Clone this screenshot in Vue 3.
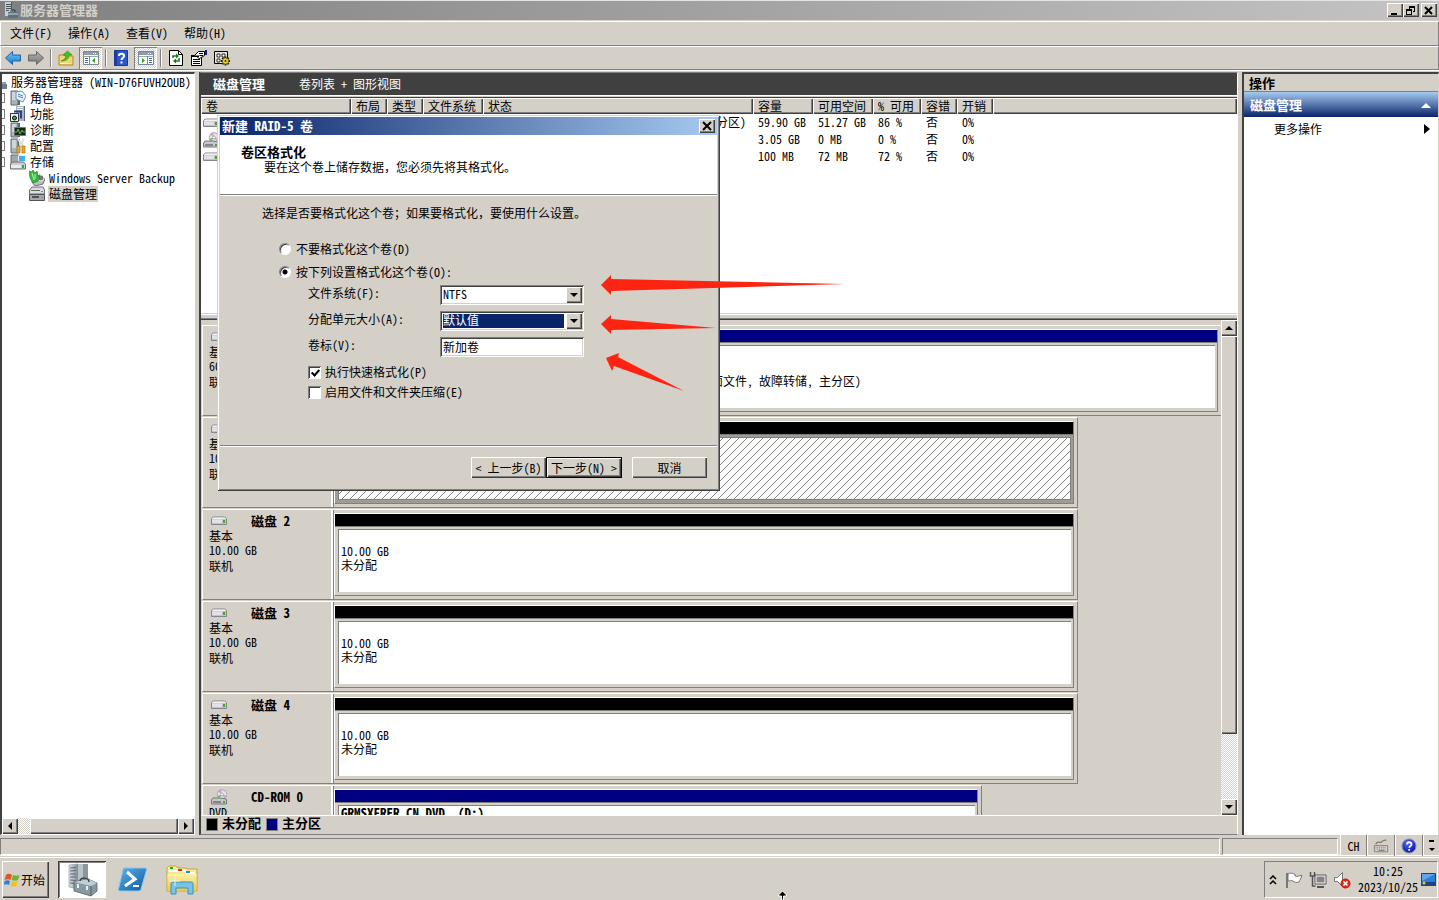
<script setup>
import { ref } from 'vue'

const menus = ['文件(F)', '操作(A)', '查看(V)', '帮助(H)']

const tools = [
  { icon: 'back', label: '后退' },
  { icon: 'forward', label: '前进' },
  { sep: true },
  { icon: 'folder-up', label: '向上' },
  { icon: 'pane-left', label: '显示/隐藏控制台树', pressed: true },
  { sep: true },
  { icon: 'help', label: '帮助' },
  { icon: 'pane-right', label: '显示/隐藏操作窗格', pressed: true },
  { sep: true },
  { icon: 'refresh', label: '刷新' },
  { icon: 'props', label: '属性' },
  { icon: 'settings', label: '设置' },
]

const tree = [
  { icon: 'roles', text: '角色' },
  { icon: 'features', text: '功能' },
  { icon: 'diag', text: '诊断' },
  { icon: 'config', text: '配置' },
  { icon: 'storage', text: '存储' },
  { icon: 'backup', text: 'Windows Server Backup', child: true },
  { icon: 'diskmgmt', text: '磁盘管理', child: true, selected: true },
]

const columns = ['卷', '布局', '类型', '文件系统', '状态', '容量', '可用空间', '% 可用', '容错', '开销', '']

const volumes = [
  { icon: 'drive', status: '状态良好 (启动, 页面文件, 故障转储, 主分区)', size: '59.90 GB', free: '51.27 GB', pct: '86 %' },
  { icon: 'cdrom', status: '', size: '3.05 GB', free: '0 MB', pct: '0 %' },
  { icon: 'drive', status: '', size: '100 MB', free: '72 MB', pct: '72 %' },
]

const disks = [
  {
    id: 0, name: '', icon: 'drive', info: ['基本', '60.00 GB', '联机'], span: 'full',
    parts: [
      { lines: [], bar: 'navy', small: true },
      { lines: ['', '状态良好 (启动, 页面文件, 故障转储, 主分区)'], bar: 'navy' },
    ],
  },
  { id: 1, name: '', icon: 'drive', info: ['基本', '10.00 GB', '联机'], span: 'wide', parts: [{ lines: [], bar: 'black', selected: true }] },
  { id: 2, name: '磁盘 2', icon: 'drive', info: ['基本', '10.00 GB', '联机'], span: 'wide', parts: [{ lines: ['10.00 GB', '未分配'], bar: 'black' }] },
  { id: 3, name: '磁盘 3', icon: 'drive', info: ['基本', '10.00 GB', '联机'], span: 'wide', parts: [{ lines: ['10.00 GB', '未分配'], bar: 'black' }] },
  { id: 4, name: '磁盘 4', icon: 'drive', info: ['基本', '10.00 GB', '联机'], span: 'wide', parts: [{ lines: ['10.00 GB', '未分配'], bar: 'black' }] },
  { id: 5, name: 'CD-ROM 0', icon: 'cdrom', info: ['DVD'], span: 'cd', parts: [{ lines: [], bar: 'navy', title: 'GRMSXFRER_CN_DVD  (D:)' }] },
]

const doFormat = ref('yes')
const fileSystem = ref('NTFS')
const unitSize = ref('默认值')
const volumeLabel = ref('新加卷')
const quick = ref(true)
const compress = ref(false)
</script>

<template>
  <div class="screen">
    <svg class="sprite" aria-hidden="true">
      <defs>
        <linearGradient id="gBlue" x1="0" y1="0" x2="0" y2="1"><stop offset="0" stop-color="#7cc8f4" /><stop offset="1" stop-color="#1478c8" /></linearGradient>
        <linearGradient id="gGrey" x1="0" y1="0" x2="0" y2="1"><stop offset="0" stop-color="#b4b4b4" /><stop offset="1" stop-color="#747474" /></linearGradient>
        <linearGradient id="gSteel" x1="0" y1="0" x2="1" y2="0"><stop offset="0" stop-color="#dfe5e8" /><stop offset="1" stop-color="#7c888f" /></linearGradient>
        <linearGradient id="gPs" x1="0" y1="0" x2="1" y2="1"><stop offset="0" stop-color="#5fb4e4" /><stop offset="1" stop-color="#0a58a8" /></linearGradient>
        <linearGradient id="gFold" x1="0" y1="0" x2="0" y2="1"><stop offset="0" stop-color="#fdf2a8" /><stop offset="1" stop-color="#ecc64c" /></linearGradient>
        <radialGradient id="gHelp" cx=".4" cy=".3" r=".8"><stop offset="0" stop-color="#4a6cff" /><stop offset="1" stop-color="#0008a0" /></radialGradient>
        <symbol id="tower" viewBox="0 0 16 16"><path d="M1 1h7v14H1z" fill="#a9b4ba" stroke="#5f6c73" /><path d="M2 3h4M2 5h4M2 7h4M2 9h4" stroke="#f4f7f8" /><path d="M8 1h2v14H8z" fill="#56646b" /></symbol>
      </defs>
      <symbol id="server" viewBox="0 0 16 16"><path d="M3 0h7v14H3z" fill="#c6d0d4" /><path d="M4 2.500h5M4 4.500h5M4 6.500h5M4 8.500h3" stroke="#44545c" /><path d="M9 0h1v8H9z" fill="#4b5a62" /><path d="M6 10h10v6H6z" fill="#5d7180" /><path d="M6 12h10" stroke="#c6d2d9" /><path d="M9 10V8h4v2" fill="none" stroke="#2e3b44" /></symbol>
      <symbol id="back" viewBox="0 0 16 14"><path d="M.5 7l7-6.500v3.500h8v6h-8v3.500z" fill="url(#gBlue)" stroke="#1a66a8" /></symbol>
      <symbol id="forward" viewBox="0 0 16 14"><path d="M15.500 7L8.500.5v3.500H.5v6h8v3.500z" fill="url(#gGrey)" stroke="#666" /></symbol>
      <symbol id="folder-up" viewBox="0 0 16 16"><path d="M1 5h5l1 1h8v9H1z" fill="#f3d476" stroke="#b18b2b" /><path d="M2 13h12v1H2z" fill="#fdf1bf" /><path d="M3 11c3-1 5-3 5-6H5l4.500-4L14 5h-3c0 4-3 6-8 6z" fill="#4ac21c" stroke="#2d8b0c" stroke-width=".6" /></symbol>
      <symbol id="pane-left" viewBox="0 0 16 14"><path d="M.5.5h15v13H.5z" fill="#fff" stroke="#7b8795" /><path d="M1 1h14v3H1z" fill="#8d9cb0" /><path d="M10 2.500h1M12 2.500h1" stroke="#fff" /><path d="M1 5.500h14" stroke="#9aa" /><path d="M6.500 5v8" stroke="#7b8795" /><path d="M2 7.500h3M2 9.500h3M2 11.500h3" stroke="#3d64a8" /><path d="M12 7v5L9 9.500z" fill="#27a51c" /></symbol>
      <symbol id="pane-right" viewBox="0 0 16 14"><path d="M.5.5h15v13H.5z" fill="#fff" stroke="#7b8795" /><path d="M1 1h14v3H1z" fill="#8d9cb0" /><path d="M10 2.500h1M12 2.500h1" stroke="#fff" /><path d="M1 5.500h14" stroke="#9aa" /><path d="M9.500 5v8" stroke="#7b8795" /><path d="M11 7.500h3M11 9.500h3M11 11.500h3" stroke="#3d64a8" /><path d="M4 7v5l3-2.500z" fill="#27a51c" /></symbol>
      <symbol id="help" viewBox="0 0 14 16"><path d="M.5.5h13v15H.5z" fill="#2b57c8" stroke="#1a3a94" /><path d="M1 1h2v14H1z" fill="#1b3f9e" /><path d="M5 6c0-3 5-3 5 0 0 2-2.500 2-2.500 4M7.500 11.500v2" fill="none" stroke="#fff" stroke-width="2" /></symbol>
      <symbol id="refresh" viewBox="0 0 14 16"><path d="M.5.5h9l4 4v11H.5z" fill="#fff" stroke="#000" /><path d="M9.500.5v4h4" fill="none" stroke="#000" /><path d="M4 8V6h4M10 8v3H6" fill="none" stroke="#14801c" stroke-width="1.500" /><path d="M7 3.500L10 6 7 8.500zM7 8.500L4 11l3 2.500z" fill="#14801c" /></symbol>
      <symbol id="props" viewBox="0 0 16 16"><path d="M.5 5.500h10v10H.5z" fill="#fff" stroke="#000" /><path d="M0 5h11v2H0z" fill="#000" /><path d="M2 9.500h7M2 11.500h7M2 13.500h7" stroke="#000" /><path d="M3.500 5.500l4-4h6v4l-5 3-2-1 2-2" fill="#fff" stroke="#000" /><path d="M8 3.500h4M9 5.500h3" stroke="#000" /><path d="M14 0h2v5h-2z" fill="#1a1a90" /></symbol>
      <symbol id="settings" viewBox="0 0 16 16"><path d="M.5 1.500h13v12H.5z" fill="#e6e3dc" stroke="#000" /><path d="M3 4h3v3H3zM3 9h3v3H3zM8 4h3v3H8z" fill="#fff" stroke="#000" stroke-width=".8" /><g transform="translate(11.500 11)"><path d="M0-4.500V4.500M-4.500 0H4.500M-3.200-3.200L3.200 3.200M-3.200 3.200L3.200-3.200" stroke="#222" stroke-width="2" /><circle r="3" fill="#f1d528" stroke="#6d5b00" stroke-width=".6" /><circle r="1" fill="#222" /></g></symbol>
      <symbol id="roles" viewBox="0 0 16 16"><use href="#tower" /><path d="M6 2l6-1 4 5-3 6-7-3z" fill="#e4f1f9" stroke="#7391a4" /><path d="M8 4l5 2M8 6l5 2" stroke="#4d86b0" /></symbol>
      <symbol id="features" viewBox="0 0 16 16"><path d="M6 0h9v15H6z" fill="#a9b4ba" /><path d="M7 1.500h6M7 3.500h6" stroke="#f4f7f8" /><path d="M14 0h1v15h-1z" fill="#56646b" /><path d="M.5 7.500h8v8h-8z" fill="#f2f2f2" stroke="#333" /><path d="M4 5.500h7v7" fill="none" stroke="#223f9e" stroke-width="2" /><circle cx="4.500" cy="12" r="2" fill="#2ca836" stroke="#111" /></symbol>
      <symbol id="diag" viewBox="0 0 16 16"><use href="#tower" /><path d="M4.500 5.500h11v8h-11z" fill="#18261a" stroke="#777" /><path d="M5 10h2l1-3 2 5 2-4 1 2h2" fill="none" stroke="#59c14a" /></symbol>
      <symbol id="config" viewBox="0 0 16 16"><use href="#tower" /><path d="M8 1l2 3v9M14 1l-2 3v5" fill="none" stroke="#dbe1e4" stroke-width="2" /><path d="M7 8h3v7H7zM12 8h3v7h-3z" fill="#f0a71e" stroke="#9a6508" stroke-width=".6" /></symbol>
      <symbol id="storage" viewBox="0 0 16 16"><path d="M1 1h8v9H1z" fill="#9fa8ad" stroke="#626b70" /><path d="M8.500 1.500h7v6h-7z" fill="#45aee4" stroke="#e9edf0" /><path d="M.5 10l2-2h11l2 2v5H.5z" fill="#c9cdd0" stroke="#555" stroke-width=".8" /><path d="M1 11h10v3H1z" fill="#ececee" /><path d="M12 11h2v3h-2z" fill="#2ab12a" /></symbol>
      <symbol id="backup" viewBox="0 0 16 16"><path d="M4 8l7-3 5 4-2 5-8 2-3-4z" fill="#b8bdc0" stroke="#6c7276" /><circle cx="12" cy="8" r="3" fill="#8d6f74" stroke="#eee" /><path d="M0 1l3 1 1-2 2 3 2-2 1 5 2-1-2 6-5 2-3-5z" fill="#35b93d" stroke="#157d1f" stroke-width=".6" /><path d="M3 3l2 7M6 4v5" stroke="#b9f0b2" /></symbol>
      <symbol id="diskmgmt" viewBox="0 0 16 16"><path d="M3 1h11l1.500 3v4H.5V4z" fill="#d9dcde" stroke="#6b6f73" /><path d="M2 4.500h9" stroke="#666" /><path d="M.5 8.500h15v6H.5z" fill="#a5a9ac" stroke="#505457" /><path d="M3 11h7" stroke="#333" stroke-width="1.500" /><path d="M12 5h2v1h-2zM12 11h2v1h-2z" fill="#1d1" /></symbol>
      <symbol id="drive" viewBox="0 0 16 10"><path d="M2 1h12l1.500 2v5.500H.5V3z" fill="#c2c2c8" stroke="#85858d" /><path d="M2 1.500h12L15 3H1z" fill="#f2f2f4" /><path d="M1 3.500h10V7H1z" fill="#e2e2e6" /><path d="M12 4h2v3h-2z" fill="#4da821" /></symbol>
      <symbol id="cdrom" viewBox="0 0 16 16"><circle cx="11" cy="5.500" r="4.800" fill="#e2e2e8" stroke="#a9a9af" /><path d="M11 5.500l-4-3 3-2zM11 5.500l4.500 1-2 3z" fill="#c879c8" opacity=".6" /><path d="M11 5.500L6.500 7 8 9z" fill="#4fca3c" /><circle cx="11" cy="5.500" r="1.400" fill="#fff" stroke="#888" stroke-width=".6" /><path d="M2 9h8l5 1 .5 1v4H.5v-4z" fill="#c6c6cc" stroke="#77777f" /><path d="M2 13h8" stroke="#444" /><path d="M12 12h2v2h-2z" fill="#4da821" /></symbol>
    </svg>

    <header class="titlebar">
      <svg class="i16"><use href="#server" /></svg>
      <h1>服务器管理器</h1>
      <div class="winbtns">
        <button aria-label="最小化"><svg viewBox="0 0 14 13"><path d="M3 9h6v2H3z" /></svg></button>
        <button aria-label="还原"><svg viewBox="0 0 14 13"><path d="M5 2h6v6H9V7h1V4H6v1H5zM2 5h6v6H2zM3 7v3h4V7z" fill-rule="evenodd" /></svg></button>
        <button class="close" aria-label="关闭"><svg viewBox="0 0 14 13"><path d="M3 3l7 7M10 3l-7 7" stroke="#000" stroke-width="2" /></svg></button>
      </div>
    </header>

    <nav class="menubar">
      <button v-for="m in menus" :key="m">{{ m }}</button>
    </nav>

    <div class="toolbar">
      <template v-for="(t, i) in tools" :key="i">
        <span v-if="t.sep" class="sep"></span>
        <button v-else :class="{ pressed: t.pressed }" :aria-label="t.label"><svg class="i16"><use :href="'#' + t.icon" /></svg></button>
      </template>
    </div>

    <main class="body">
      <aside class="tree">
        <ul>
          <li class="root"><svg class="half" viewBox="0 0 6 16"><path d="M0 10h5v5H0z" fill="#6b7d89" /><path d="M0 9h4" stroke="#2e3b44" /></svg><span>服务器管理器 (WIN-D76FUVH2OUB)</span></li>
          <li v-for="n in tree" :key="n.text" :class="{ child: n.child, selected: n.selected }">
            <i v-if="!n.child" class="expander"></i>
            <svg class="i16"><use :href="'#' + n.icon" /></svg><span>{{ n.text }}</span>
          </li>
        </ul>
        <div class="hscroll">
          <button aria-label="向左滚动"><svg viewBox="0 0 8 8"><path d="M6 0v8L2 4z" /></svg></button>
          <span class="hthumb"></span>
          <button aria-label="向右滚动"><svg viewBox="0 0 8 8"><path d="M2 0v8l4-4z" /></svg></button>
        </div>
      </aside>

      <section class="center">
        <div class="heading"><h2>磁盘管理</h2><span>卷列表 + 图形视图</span></div>
        <div class="vlist">
          <table>
            <colgroup><col class="c-name" /><col class="c36" /><col class="c36" /><col class="c60" /><col class="c-status" /><col class="c60" /><col class="c60" /><col class="c48" /><col class="c36" /><col class="c36" /><col /></colgroup>
            <thead><tr><th v-for="(c, i) in columns" :key="i">{{ c }}</th></tr></thead>
            <tbody>
              <tr v-for="(v, i) in volumes" :key="i">
                <td class="vicon"><svg class="i16"><use :href="'#' + v.icon" /></svg></td>
                <td></td><td></td><td></td>
                <td>{{ v.status }}</td><td>{{ v.size }}</td><td>{{ v.free }}</td><td>{{ v.pct }}</td><td>否</td><td>0%</td><td></td>
              </tr>
            </tbody>
          </table>
        </div>
        <div class="splitter"></div>
        <div class="graph">
          <div class="disks">
            <article v-for="d in disks" :key="d.id" class="disk" :class="d.span">
              <div class="dinfo">
                <div class="dhead"><svg class="i16"><use :href="'#' + d.icon" /></svg><h3>{{ d.name }}</h3></div>
                <p v-for="t in d.info" :key="t">{{ t }}</p>
              </div>
              <div class="parts">
                <div v-for="(p, i) in d.parts" :key="i" class="part" :class="{ small: p.small, selected: p.selected }">
                  <div class="bar" :class="p.bar"></div>
                  <div class="frame"><div class="box">
                    <strong>{{ p.title }}</strong>
                    <p v-for="l in p.lines" :key="l">{{ l }}</p>
                  </div></div>
                </div>
              </div>
            </article>
          </div>
          <div class="vscroll">
            <button aria-label="向上滚动"><svg viewBox="0 0 8 8"><path d="M0 6h8L4 2z" /></svg></button>
            <span class="vthumb"></span>
            <span class="vtrack"></span>
            <button aria-label="向下滚动"><svg viewBox="0 0 8 8"><path d="M0 2h8L4 6z" /></svg></button>
          </div>
        </div>
        <div class="legend"><i class="black"></i><span>未分配</span><i class="navy"></i><span>主分区</span></div>
      </section>

      <aside class="actions">
        <h2>操作</h2>
        <h3><span>磁盘管理</span><svg viewBox="0 0 10 6"><path d="M0 6h10L5 1z" fill="#fff" /></svg></h3>
        <button><span>更多操作</span><svg viewBox="0 0 6 10"><path d="M0 0v10l6-5z" /></svg></button>
      </aside>
    </main>

    <footer class="status">
      <span class="s1"></span><span class="s2"></span>
      <div class="langbar">
        <button class="ch">CH</button>
        <button aria-label="键盘"><svg viewBox="0 0 18 16"><path d="M1.500 7.500h15v7h-15z" fill="#d6d3cc" stroke="#7c7c7c" /><path d="M3 9.500h12M3 11.500h12" stroke="#757575" stroke-dasharray="1 1" /><path d="M6 13h7" stroke="#757575" /><path d="M3 6c3-5 5 0 7-3s3 0 5-2" fill="none" stroke="#7c7c7c" stroke-width="1.500" /></svg></button>
        <button aria-label="帮助"><svg viewBox="0 0 16 16"><circle cx="8" cy="8" r="7" fill="url(#gHelp)" stroke="#8890a8" /><path d="M6 6.500c0-3 4.500-3 4.500 0 0 1.500-2.200 1.500-2.200 3.200M8.200 11v1.800" fill="none" stroke="#fff" stroke-width="1.800" /></svg></button>
        <button class="more" aria-label="选项"><svg viewBox="0 0 8 14"><path d="M1 1h5v2H1zM1 9h6l-3 3z" /></svg></button>
      </div>
    </footer>

    <footer class="taskbar">
      <button class="start">
        <svg viewBox="0 0 16 16"><path d="M2 3c2-2 4-1 6 0L6.500 8C5 7 3 7 .5 8z" fill="#e8541c" /><path d="M9 3c2 1 4 1 6.500 0L14 8c-2 1-4 1-6.500 0z" fill="#6db52c" /><path d="M.5 9C3 8 4.500 8 6 9L5 13c-2-1-3.500-1-5 0z" fill="#2f7fd6" /><path d="M7.500 9c2 1 4 1 6.500 0l-1.500 5c-2 1-4 1-6 0z" fill="#f7c027" /></svg>
        <span>开始</span>
      </button>
      <button class="task active" aria-label="服务器管理器">
        <svg viewBox="0 0 32 34"><path d="M3 2l9-1v25l-9-2z" fill="url(#gSteel)" stroke="#88949a" stroke-width=".6" /><path d="M4 5l6-.5M4 8l6-.5M4 11h6M4 14h6M4 17l6 .5M4 20l6 .5" stroke="#5c6970" /><path d="M12 1h10v26H12z" fill="#8b979c" /><path d="M12 1h5v26h-5z" fill="#b9c3c7" /><path d="M8 19l14-3 9 4v8l-6 5-17-5z" fill="#8799a1" stroke="#51616a" stroke-width=".8" /><path d="M8 19l17 4 6-3-9-4z" fill="#c1ced3" /><path d="M14 18c0-4 9-4 9 1" fill="none" stroke="#39464e" stroke-width="1.500" /><path d="M25 23v10" stroke="#51616a" /><path d="M12 21v4M21 23v4" stroke="#e9eef0" stroke-width="2" /></svg>
      </button>
      <button class="task" aria-label="PowerShell">
        <svg viewBox="0 0 32 32"><path d="M8 4h21c1 0 2 1 1.500 2L25 25c0 1-1 2-3 2H4c-1 0-2-1-1.500-2L7 6c0-1 0-2 1-2z" fill="url(#gPs)" stroke="#8cc8ea" /><path d="M11 8l8 7-10 7" fill="none" stroke="#fff" stroke-width="3" /><path d="M17 22h6" stroke="#fff" stroke-width="2" /></svg>
      </button>
      <button class="task" aria-label="文件管理器">
        <svg viewBox="0 0 32 32"><path d="M1 4l2-2h7l2 2h8l1 1h10v22H1z" fill="url(#gFold)" stroke="#c9a23b" /><path d="M3 6h10v2H3zM12 6h8v2h-8zM20 8h9v2h-9z" fill="#fff" /><path d="M4 3h3v2H4z" fill="#0b2" /><path d="M12 5h4v2h-4z" fill="#d43a1a" /><path d="M20 7h4v2h-4z" fill="#1b8ee8" /><path d="M1.500 10h29v17h-29z" fill="url(#gFold)" /><path d="M5 30V20c0-2 1-2 2-2h18c2 0 2 1 2 2v10h-5v-6H10v6z" fill="#79c3e6" stroke="#3b93bf" /><path d="M9 12v10M4 17h10" stroke="#fff" opacity=".8" /></svg>
      </button>
      <svg class="cursor" viewBox="0 0 9 9"><path d="M4.500 0l4 4v1h-3v4h-2V5h-3V4z" stroke="#fff" /></svg>
      <div class="tray">
        <svg class="chev" viewBox="0 0 8 10"><path d="M1 4l3-3 3 3M1 9l3-3 3 3" fill="none" stroke="#000" stroke-width="1.500" /></svg>
        <svg class="t18" viewBox="0 0 18 18"><path d="M2 2v15" stroke="#777" stroke-width="2" /><path d="M3 3c3-2 5 0 7 0v2c2 1 4 0 7-1-1 3-2 5-3 7-3 1-5 0-6-1-2-1-3 0-5 0z" fill="#fff" stroke="#777" /></svg>
        <svg class="t18" viewBox="0 0 18 18"><path d="M6 4h11v9H6z" fill="#fff" stroke="#555" /><path d="M7.500 5.500h8v6h-8z" fill="#858585" /><path d="M8 16h7" stroke="#555" stroke-width="2" /><path d="M1.500 1v4h4V1M3.500 5v10h3" fill="none" stroke="#555" stroke-width="1.500" /></svg>
        <svg class="t18" viewBox="0 0 18 18"><path d="M1.500 6.500h3l5-5v14l-5-5h-3z" fill="#fff" stroke="#777" /><circle cx="12.500" cy="12.500" r="4.500" fill="#e02a20" stroke="#b8140c" /><path d="M10.500 10.500l4 4M14.500 10.500l-4 4" stroke="#fff" stroke-width="1.500" /></svg>
        <div class="clock"><time>10:25</time><time>2023/10/25</time></div>
        <svg class="desk" viewBox="0 0 15 13"><path d="M.5.500h14v9H.5z" fill="#2c7fd8" stroke="#1b3f80" /><path d="M1 1h13L1 8z" fill="#76b6f0" opacity=".7" /><path d="M0 10h15v3H0z" fill="#20457c" /><circle cx="3" cy="10" r="1.500" fill="#f5c62a" /></svg>
      </div>
    </footer>

    <form class="dialog" @submit.prevent>
      <header class="dtitle"><h2>新建 RAID-5 卷</h2><button type="button" aria-label="关闭"><svg viewBox="0 0 14 13"><path d="M3 2l8 8M11 2l-8 8" stroke="#000" stroke-width="2" /></svg></button></header>
      <div class="dbanner"><h3>卷区格式化</h3><p>要在这个卷上储存数据，您必须先将其格式化。</p></div>
      <div class="dbody">
        <p>选择是否要格式化这个卷；如果要格式化，要使用什么设置。</p>
        <label class="opt"><input v-model="doFormat" type="radio" name="fmt" value="no" />不要格式化这个卷(D)</label>
        <label class="opt"><input v-model="doFormat" type="radio" name="fmt" value="yes" />按下列设置格式化这个卷(O):</label>
        <div class="fields">
          <label for="fs">文件系统(F):</label>
          <div class="combo"><select id="fs" v-model="fileSystem"><option>NTFS</option></select><span><svg viewBox="0 0 8 8"><path d="M0 2h8L4 6z" /></svg></span></div>
          <label for="au">分配单元大小(A):</label>
          <div class="combo"><select id="au" v-model="unitSize" class="hot"><option>默认值</option></select><span><svg viewBox="0 0 8 8"><path d="M0 2h8L4 6z" /></svg></span></div>
          <label for="vl">卷标(V):</label>
          <input id="vl" v-model="volumeLabel" type="text" />
        </div>
        <label class="chk"><input v-model="quick" type="checkbox" />执行快速格式化(P)</label>
        <label class="chk"><input v-model="compress" type="checkbox" />启用文件和文件夹压缩(E)</label>
      </div>
      <div class="dfoot">
        <button type="button">&lt; 上一步(B)</button><button type="submit" class="default">下一步(N) &gt;</button><button type="button" class="cancel">取消</button>
      </div>
    </form>

    <svg class="arrows" viewBox="0 0 250 130" aria-hidden="true">
      <g fill="#ff2412">
        <path d="M1 15L11 5v4L245 14 11 21v4z" />
        <path d="M1 54l10-9v4l105 9-105 2v4z" />
        <path d="M6 88l13-5-1 4 66 34-70-25-2 5z" />
      </g>
    </svg>
  </div>
</template>

<style>
html, body { margin: 0; background: #d4d0c8; }
</style>

<style scoped>
.screen {
  --face: #d4d0c8;
  --dark: #808080;
  --deep: #404040;
  --raised: inset 1px 1px #fff, inset -1px -1px var(--deep), inset -2px -2px var(--dark);
  position: relative;
  display: flex;
  flex-direction: column;
  height: 100vh;
  overflow: hidden;
  background: var(--face);
  color: #000;
  font: 12px/16px "Noto Sans Mono CJK SC", "Liberation Mono", "Noto Sans CJK SC", monospace;
}
* { box-sizing: border-box; }
h1, h2, h3, p, ul { margin: 0; padding: 0; list-style: none; }
h1, h2, h3, strong { font-size: 13px; font-weight: 700; white-space: pre; }
button, input, select { font: inherit; color: inherit; margin: 0; padding: 0; border: 0; border-radius: 0; background: none; }
svg { display: block; flex: none; }
.sprite { position: absolute; width: 0; height: 0; }
.i16 { width: 16px; height: 16px; }

.titlebar { display: flex; align-items: center; gap: 2px; flex: none; height: 20px; padding: 0 2px 1px; border-top: 1px solid #e4e4e4; background: linear-gradient(90deg, #808080, #c4c4c4); }
.titlebar h1 { flex: 1; padding-bottom: 1px; color: var(--face); line-height: 16px; }
.winbtns { display: flex; }
.winbtns button, .dtitle button { width: 16px; height: 14px; background: var(--face); box-shadow: var(--raised); }
.winbtns .close { margin-left: 2px; }
.winbtns svg, .dtitle svg { width: 14px; height: 13px; margin-left: 1px; }

.menubar { display: flex; flex: none; height: 25px; margin-top: 1px; padding: 0 0 2px 1px; border: 1px solid #fff; border-bottom-color: var(--dark); border-right-color: var(--dark); }
.menubar button { padding: 0 8px; }
.toolbar { display: flex; align-items: center; flex: none; height: 24px; border: 1px solid #fff; border-bottom-color: var(--dark); border-right-color: var(--dark); }
.toolbar button { display: grid; place-items: center; width: 23px; height: 22px; }
.toolbar .pressed { margin-left: 2px; background: repeating-conic-gradient(#fff 0 25%, #d4d0c8 0 50%) 0 0 / 2px 2px; box-shadow: inset 1px 1px var(--dark), inset -1px -1px #fff; }
.sep { width: 2px; height: 18px; margin: 0 2px 0 3px; border-left: 1px solid var(--dark); border-right: 1px solid #fff; }

.body { display: flex; flex: 1; min-height: 0; gap: 4px; padding-top: 1px; border-top: 1px solid #fff; }
.tree { display: flex; flex-direction: column; flex: none; width: 195px; border: 1px solid #fff; border-top: 2px solid var(--deep); border-left: 2px solid var(--deep); background: #fff; }
.tree ul { flex: 1; overflow: hidden; }
.tree li { display: flex; align-items: center; height: 16px; white-space: pre; }
.tree li span { padding: 0 1px; line-height: 16px; }
.tree .i16 { margin-right: 3px; }
.tree .half { width: 6px; height: 16px; margin-right: 2px; }
.tree .child { padding-left: 27px; }
.tree .selected span { background: var(--face); }
.expander { flex: none; width: 3px; height: 10px; margin-right: 5px; border: 1px solid var(--dark); border-left: 0; }
.hscroll { display: flex; height: 16px; background: repeating-conic-gradient(#fff 0 25%, #d4d0c8 0 50%) 0 0 / 2px 2px; }
.hscroll button, .vscroll button { display: grid; place-items: center; flex: none; width: 16px; height: 16px; background: var(--face); box-shadow: var(--raised); }
.hscroll svg, .vscroll svg { width: 8px; height: 8px; }
.hthumb { flex: 1; margin-left: 12px; background: var(--face); box-shadow: var(--raised); }

.center { display: flex; flex-direction: column; flex: 1; min-width: 0; border: 1px solid var(--dark); border-left: 2px solid var(--deep); border-right: 1px solid #fff; }
.heading { display: flex; align-items: center; gap: 34px; flex: none; height: 23px; padding-left: 12px; background: var(--deep); color: #fff; border-bottom: 1px solid #fff; }
.vlist { flex: none; height: 216px; margin-top: 1px; border-top: 1px solid var(--deep); overflow: hidden; background: #fff; }
table { width: 100%; table-layout: fixed; border-collapse: collapse; }
.c-name { width: 150px; } .c36 { width: 36px; } .c48 { width: 48px; } .c60 { width: 60px; } .c-status { width: 270px; }
th { height: 16px; padding: 0 0 0 5px; font-weight: 400; line-height: 16px; text-align: left; white-space: nowrap; background: var(--face); box-shadow: var(--raised); }
td { height: 17px; padding: 0 0 2px 5px; line-height: 15px; white-space: pre; }
.vicon { padding: 0 0 0 2px; }
.splitter { flex: none; height: 6px; border-top: 1px solid #fff; border-bottom: 1px solid var(--deep); margin-top: 1px; box-shadow: inset 0 -1px var(--dark); }
.graph { display: flex; flex: 1; min-height: 0; }
.disks { flex: 1; min-width: 0; padding: 5px 0 0 1px; overflow: hidden; }
.disk { display: flex; width: 876px; height: 91px; margin-bottom: 1px; border: 1px solid #fff; border-right-color: var(--dark); border-bottom-color: var(--dark); }
.disk.full { width: 100%; border-right: 0; }
.disk.cd { width: 780px; }
.dinfo { flex: none; width: 130px; padding: 3px 0 0 6px; border-right: 2px solid #fff; box-shadow: 1px 0 var(--dark); }
.dhead { display: flex; align-items: center; gap: 24px; height: 16px; padding-left: 2px; }
.dinfo p { height: 14px; line-height: 14px; }
.dinfo p:last-child:nth-child(4) { height: 16px; line-height: 18px; }
.parts { display: flex; flex: 1; min-width: 0; gap: 1px; padding: 3px 3px 3px 1px; }
.part { display: flex; flex-direction: column; flex: 1; min-width: 0; border: 1px solid #fff; border-right-color: var(--dark); border-bottom-color: var(--dark); }
.part.small { flex: none; width: 261px; }
.bar { flex: none; height: 13px; border-bottom: 1px solid var(--dark); }
.navy { background: #000080; }
.black { background: #000; }
.frame { flex: 1; min-height: 0; padding: 2px 2px 3px 3px; }
.box { height: 100%; padding-left: 2px; overflow: hidden; white-space: nowrap; border-top: 1px solid var(--dark); border-left: 1px solid var(--dark); background: #fff; }
.box strong, .box p { display: block; height: 14px; line-height: 14px; }
.part.selected .frame { background: #a09c94; }
.part.selected .box { border: 1px solid var(--dark); background: linear-gradient(135deg, transparent 45%, #808080 46%, #808080 54%, transparent 55%) 0 0 / 8px 8px #fff; }
.vscroll { display: flex; flex-direction: column; flex: none; width: 16px; background: repeating-conic-gradient(#fff 0 25%, #d4d0c8 0 50%) 0 0 / 2px 2px; }
.vthumb { flex: 85; background: var(--face); box-shadow: var(--raised); }
.vtrack { flex: 14; }
.legend { display: flex; align-items: center; gap: 4px; flex: none; height: 19px; padding: 0 0 2px 5px; border-top: 1px solid #fff; font-size: 13px; font-weight: 700; }
.legend span { padding-bottom: 2px; }
.legend i { width: 12px; height: 13px; border: 1px solid var(--dark); }
.legend .navy { margin-left: 1px; }

.actions { flex: none; width: 197px; border-top: 2px solid var(--deep); border-left: 2px solid var(--deep); border-right: 1px solid var(--face); background: #fff; }
.actions h2 { height: 18px; padding-left: 5px; line-height: 18px; background: var(--face); border-bottom: 1px solid var(--dark); }
.actions h3 { display: flex; align-items: center; justify-content: space-between; height: 25px; padding: 0 7px 0 6px; color: #fff; background: linear-gradient(#a6caf0, #0a246a); }
.actions h3 svg { width: 10px; height: 6px; }
.actions button { display: flex; align-items: center; justify-content: space-between; width: 100%; height: 24px; padding: 0 8px 0 30px; }
.actions button svg { width: 6px; height: 10px; }

.status { display: flex; flex: none; gap: 2px; height: 21px; padding-top: 3px; border-bottom: 1px solid #fff; }
.status > span { border: 1px solid var(--dark); border-right-color: #fff; border-bottom-color: #fff; }
.s1 { flex: 1; }
.s2 { width: 116px; }
.langbar { display: flex; width: 99px; height: 21px; margin-top: -3px; }
.langbar button { display: grid; place-items: center; width: 28px; border-left: 1px solid #fff; border-right: 1px solid var(--dark); }
.langbar .ch { width: 27px; }
.langbar svg { width: 16px; height: 16px; }
.langbar .more { width: 16px; border-right: 0; }
.langbar .more svg { width: 8px; height: 14px; }

.taskbar { display: flex; flex: none; height: 43px; margin-top: 1px; padding: 3px 1px 2px 2px; border-top: 1px solid #fff; }
.start { display: flex; align-items: center; gap: 1px; width: 47px; margin-right: 9px; padding-left: 2px; background: var(--face); box-shadow: var(--raised); }
.start svg { width: 16px; height: 16px; }
.task { display: grid; place-items: center; width: 48px; margin-right: 2px; }
.task svg { width: 32px; height: 34px; }
.task.active { background: #fff; box-shadow: inset 1px 1px var(--deep), inset -1px -1px #fff, inset 2px 2px var(--dark); }
.cursor { position: absolute; left: 778px; bottom: 0; width: 9px; height: 9px; }
.tray { display: flex; align-items: center; gap: 6px; width: 174px; margin-left: auto; padding-left: 4px; border: 1px solid var(--dark); border-right-color: #fff; border-bottom-color: #fff; }
.chev { width: 8px; height: 10px; margin-right: 2px; }
.t18 { width: 18px; height: 18px; }
.clock { display: flex; flex-direction: column; align-items: center; width: 62px; padding-bottom: 2px; }
.clock time { white-space: nowrap; }
.desk { width: 15px; height: 13px; margin-left: -4px; }

.dialog { position: absolute; left: 217px; top: 115px; display: flex; flex-direction: column; width: 503px; height: 376px; padding: 2px 3px 3px; background: var(--face); box-shadow: inset 1px 1px var(--face), inset -1px -1px var(--deep), inset 2px 2px #fff, inset -2px -2px var(--dark); }
.dtitle { display: flex; align-items: center; justify-content: space-between; flex: none; height: 18px; padding: 0 2px; color: #fff; background: linear-gradient(90deg, #0a246a, #a6caf0); }
.dbanner { flex: none; height: 60px; padding: 9px 0 0 21px; background: #fff; border-bottom: 1px solid var(--dark); }
.dbanner h3 { line-height: 16px; }
.dbanner p { padding-left: 23px; line-height: 14px; }
.dbody { flex: 1; padding: 9px 0 0 42px; border-top: 1px solid #fff; }
.dbody > p { margin-bottom: 16px; }
.opt { display: flex; align-items: center; gap: 5px; height: 23px; padding-left: 17px; white-space: nowrap; }
.opt input { appearance: none; width: 12px; height: 12px; border-radius: 50%; background: #fff; border: 1px solid; border-color: var(--dark) #fff #fff var(--dark); box-shadow: inset 1px 1px var(--deep); }
.opt input:checked { background: radial-gradient(circle, #000 0 2px, #fff 3px); }
.fields { display: grid; grid-template-columns: 132px 144px; grid-template-rows: 20px 20px 20px; row-gap: 6px; margin: 2px 0 5px 46px; }
.fields label { white-space: nowrap; }
.combo, .fields > input { position: relative; width: 144px; height: 20px; padding: 2px; background: #fff; box-shadow: inset 1px 1px var(--dark), inset -1px -1px #fff, inset 2px 2px var(--deep), inset -2px -2px var(--face); }
.combo select { appearance: none; display: block; width: 123px; height: 16px; padding: 0 0 2px 1px; line-height: 14px; outline: 0; }
.combo .hot { color: #fff; background: #0a246a; box-shadow: inset 0 0 0 1px #fff; }
.combo span { position: absolute; right: 2px; top: 2px; display: grid; place-items: center; width: 16px; height: 16px; background: var(--face); box-shadow: var(--raised); pointer-events: none; }
.combo span svg { width: 8px; height: 8px; }
.fields > input { padding: 1px 3px 3px; }
.chk { display: flex; align-items: center; gap: 4px; width: max-content; height: 20px; padding-left: 46px; }
.chk input { appearance: none; width: 13px; height: 13px; background: #fff; box-shadow: inset 1px 1px var(--dark), inset -1px -1px #fff, inset 2px 2px var(--deep); }
.chk input:checked::before { content: ""; display: block; width: 3px; height: 6px; margin: 2px 0 0 5px; border: solid #000; border-width: 0 2px 2px 0; transform: rotate(42deg); }
.dfoot { display: flex; flex: none; justify-content: flex-end; height: 43px; padding: 11px 10px 0; border-top: 1px solid var(--dark); box-shadow: inset 0 1px #fff; }
.dfoot button { width: 75px; height: 21px; white-space: nowrap; background: var(--face); box-shadow: var(--raised); }
.dfoot .default { width: 76px; border: 1px solid #000; }
.dfoot .cancel { margin-left: 10px; }
.arrows { position: absolute; left: 600px; top: 270px; width: 250px; height: 130px; pointer-events: none; }
</style>
